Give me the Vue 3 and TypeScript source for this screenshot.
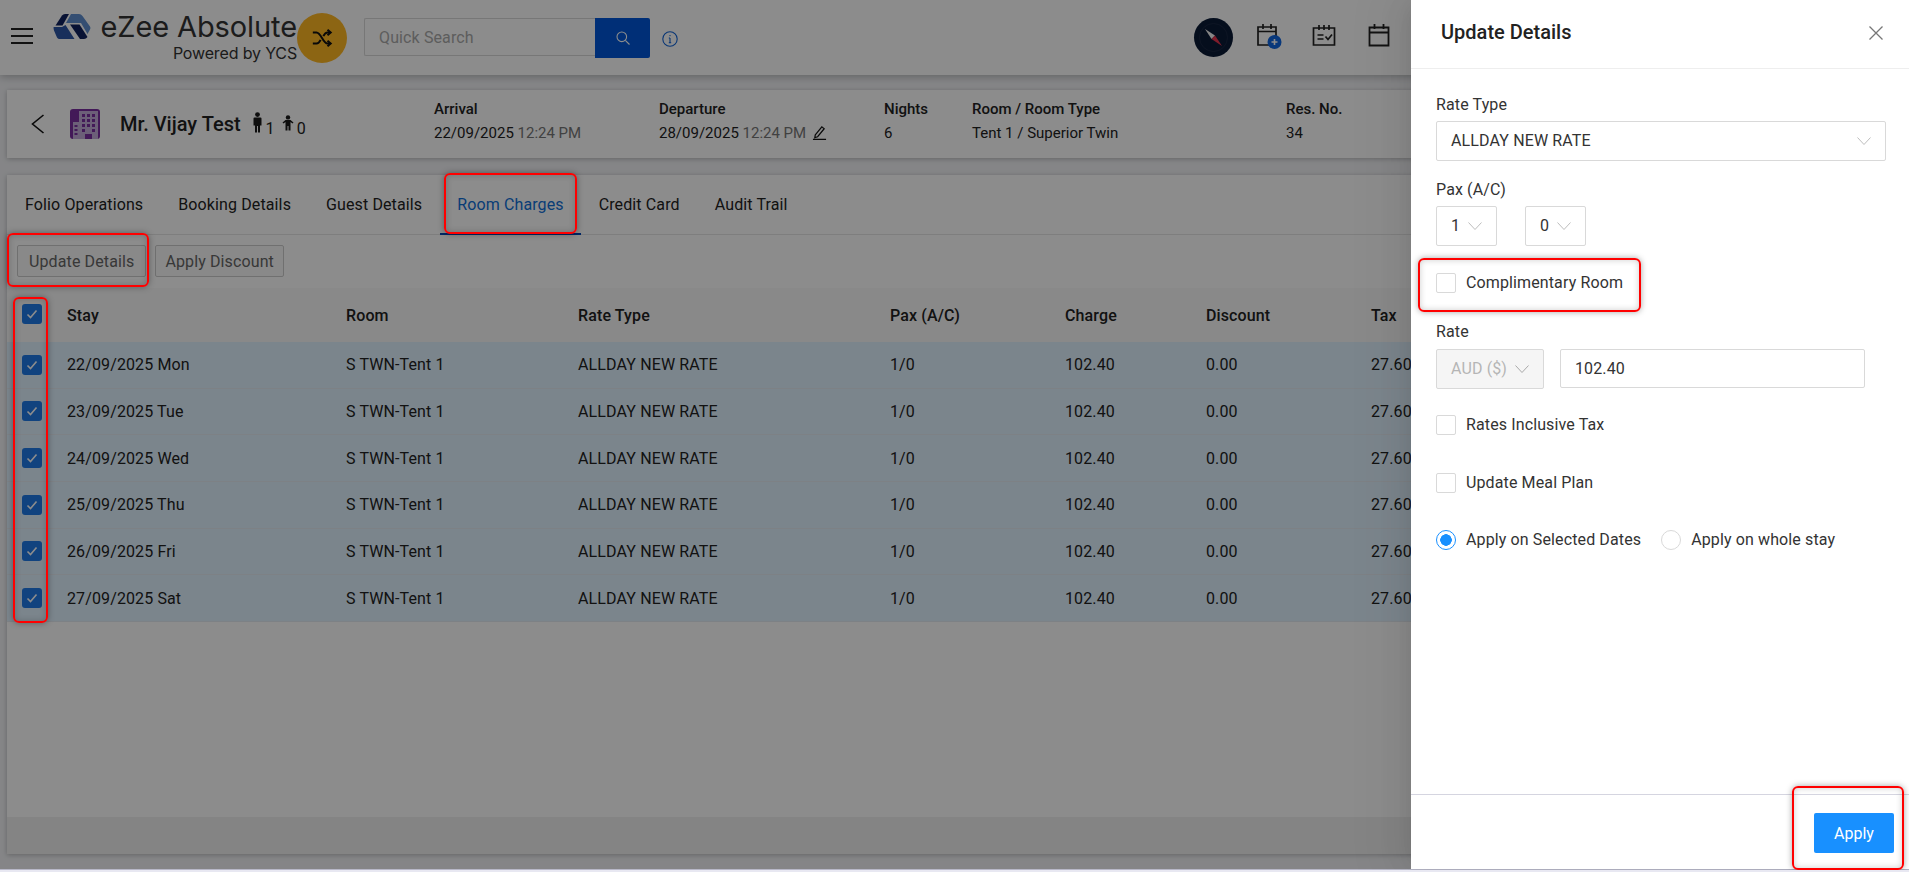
<script setup lang="ts">
interface Tab { label: string; active?: boolean }
const tabs: Tab[] = [
  { label: 'Folio Operations' },
  { label: 'Booking Details' },
  { label: 'Guest Details' },
  { label: 'Room Charges', active: true },
  { label: 'Credit Card' },
  { label: 'Audit Trail' },
]
const columns: string[] = ['Stay', 'Room', 'Rate Type', 'Pax (A/C)', 'Charge', 'Discount', 'Tax']
const stays: string[] = [
  '22/09/2025 Mon',
  '23/09/2025 Tue',
  '24/09/2025 Wed',
  '25/09/2025 Thu',
  '26/09/2025 Fri',
  '27/09/2025 Sat',
]
</script>

<template>
  <div class="app">
    <header class="topbar">
      <div class="burger"><i></i><i></i><i></i></div>
      <svg class="logo" viewBox="0 0 38 27" width="38" height="27">
        <path d="M9 2.500Q10 1 12 1H16L9.500 12.500H2.500Z" fill="#10225f" />
        <path d="M18 1H26Q28 1 29.500 3L37 13.500Q38 15 37 16.500L34.500 21 28 10H13Z" fill="#5f8fd0" />
        <path d="M17 11.500H26.500L34.500 24Q33 26 31 26H27Z" fill="#0f2260" />
        <path d="M.6 14H9L12.500 12 21.500 26H6.500Q5 26 4 24.500L1 17.500Q.4 15.500 .6 14Z" fill="#2c56a6" />
      </svg>
      <div class="brand">
        <span class="brand-name">eZee Absolute</span>
        <span class="brand-sub">Powered by YCS</span>
      </div>
      <div class="shuffle">
        <svg viewBox="0 0 24 24" width="22" height="22" fill="none" stroke="#111" stroke-width="2.200">
          <path d="M2 6h4c5 0 7 12 12 12h3" />
          <path d="M2 18h4c2 0 3.500-2 4.500-4M13.500 10c1-2 2.500-4 4.500-4h3" />
          <path d="M18 3l3.500 3L18 9M18 15l3.500 3L18 21" />
        </svg>
      </div>
      <div class="search">
        <span class="search-input">Quick Search</span>
        <span class="search-btn">
          <svg viewBox="0 0 16 16" width="16" height="16" fill="none" stroke="#fff" stroke-width="1.100">
            <circle cx="6.800" cy="6.800" r="4.800" />
            <path d="M10.300 10.300 14.500 14.500" />
          </svg>
        </span>
      </div>
      <svg class="info" viewBox="0 0 16 16" width="16" height="16" fill="none" stroke="#0f62d6" stroke-width="1.100">
        <circle cx="8" cy="8" r="7.200" />
        <path d="M8 7v4.800M6.800 7H8M6.800 11.800h2.400" />
        <circle cx="8" cy="4.600" r=".7" fill="#0f62d6" stroke="none" />
      </svg>
      <div class="top-icons">
        <div class="compass">
          <svg viewBox="0 0 39 39" width="39" height="39">
            <circle cx="19.500" cy="19.500" r="14" fill="none" stroke="#1d2a44" stroke-width=".8" />
            <path d="M11 11 L21 17.500 L17.500 21 Z" fill="#f4f4f4" />
            <path d="M28 28 L21 17.500 L17.500 21 Z" fill="#e8344e" />
          </svg>
        </div>
        <svg class="cal-plus" viewBox="0 0 27 27" width="27" height="27" fill="none" stroke="#222" stroke-width="1.700">
          <path d="M15 22H3V4h18v10" />
          <path d="M3 8.500h18M8 1v5M16 1v5" />
          <circle cx="19.500" cy="19" r="7" fill="#1066e0" stroke="none" />
          <path d="M19.500 16v6M16.500 19h6" stroke="#fff" stroke-width="1.600" />
        </svg>
        <svg class="cal-check" viewBox="0 0 24 22" width="24" height="22" fill="none" stroke="#222" stroke-width="1.700">
          <path d="M1.500 4h21v17h-21z" />
          <path d="M7 1v5M12 1v5M17 1v5" />
          <path d="M5.500 11h6M5.500 15h6M13.500 12.500l2.500 3 4-5" />
        </svg>
        <svg class="cal-plain" viewBox="0 0 22 24" width="22" height="24" fill="none" stroke="#222" stroke-width="1.800">
          <path d="M1.500 4.500h19v18h-19zM1.500 9.500h19M6.500 1v5M15.500 1v5" />
        </svg>
      </div>
    </header>

    <main class="content">
      <section class="summary">
        <div class="who">
          <svg class="back" viewBox="0 0 14 20" width="14" height="20" fill="none" stroke="#111" stroke-width="1.600">
            <path d="M12.500 1 1.500 10l11 9" />
          </svg>
          <div class="hotel">
            <svg viewBox="0 0 30 30" width="30" height="30" fill="#c5aedb">
              <path d="M9 2h19v28H9z" />
              <path d="M3 13h6v17H3z" />
              <g fill="#7b2fa0">
                <path d="M12 5h3v3h-3zM17 5h3v3h-3zM22 5h3v3h-3zM12 10h3v3h-3zM17 10h3v3h-3zM22 10h3v3h-3zM12 15h3v3h-3zM17 15h3v3h-3zM22 15h3v3h-3zM12 20h3v3h-3zM22 20h3v3h-3zM15 25h7v5h-7zM4.500 16h3v2h-3zM4.500 20h3v2h-3zM4.500 24h3v2h-3z" />
              </g>
            </svg>
          </div>
          <span class="guest">Mr. Vijay Test</span>
          <svg class="adult" viewBox="0 0 10 21" width="11" height="21" fill="#1a1a1a">
            <circle cx="5" cy="2.600" r="2.400" />
            <path d="M1 6.500Q1 5.500 2 5.500h6Q9 5.500 9 6.500v7H7.500V20.500h-2V14h-1V20.500h-2V13.500H1z" />
          </svg>
          <span class="count">1</span>
          <svg class="child" viewBox="0 0 12 16" width="12" height="16" fill="#1a1a1a">
            <circle cx="6" cy="2.400" r="2.200" />
            <path d="M.5 7.500 3.500 5h5l3 2.500-1 1L8.500 7v3.200V15.500h-2V11h-1v4.500h-2V7L1.500 8.500z" />
          </svg>
          <span class="count">0</span>
        </div>
        <div class="meta meta-arrival">
          <b>Arrival</b>
          <span>22/09/2025 <em>12:24 PM</em></span>
        </div>
        <div class="meta meta-departure">
          <b>Departure</b>
          <span>28/09/2025 <em>12:24 PM</em>
            <svg class="edit" viewBox="0 0 16 16" width="15" height="15" fill="none" stroke="#111" stroke-width="1.300">
              <path d="M3.500 10.500 10.500 2l2.500 2-7 8.500-3 1zM1 15.300h14" />
            </svg>
          </span>
        </div>
        <div class="meta meta-nights">
          <b>Nights</b>
          <span>6</span>
        </div>
        <div class="meta meta-room">
          <b>Room / Room Type</b>
          <span>Tent 1 / Superior Twin</span>
        </div>
        <div class="meta">
          <b>Res. No.</b>
          <span>34</span>
        </div>
      </section>

      <section class="folio">
        <nav class="tabs">
          <span v-for="tab in tabs" :key="tab.label" class="tab" :class="{ active: tab.active }">{{ tab.label }}</span>
        </nav>
        <div class="actions">
          <button class="btn">Update Details</button>
          <button class="btn btn-discount">Apply Discount</button>
        </div>
        <div class="table">
          <div class="row head">
            <span class="check"><svg viewBox="0 0 20 20" width="20" height="20"><path d="M5.500 10.500l3 3 6-7" fill="none" stroke="#fff" stroke-width="1.600" /></svg></span>
            <span v-for="c in columns" :key="c">{{ c }}</span>
          </div>
          <div v-for="s in stays" :key="s" class="row body-row">
            <span class="check"><svg viewBox="0 0 20 20" width="20" height="20"><path d="M5.500 10.500l3 3 6-7" fill="none" stroke="#fff" stroke-width="1.600" /></svg></span>
            <span>{{ s }}</span>
            <span>S TWN-Tent 1</span>
            <span>ALLDAY NEW RATE</span>
            <span>1/0</span>
            <span>102.40</span>
            <span>0.00</span>
            <span>27.60</span>
          </div>
        </div>
        <div class="table-fill"></div>
        <div class="table-foot"></div>
      </section>
    </main>

    <div class="overlay"></div>

    <aside class="drawer">
      <div class="drawer-head">
        <h2>Update Details</h2>
        <svg viewBox="0 0 14 14" width="14" height="14" fill="none" stroke="#777" stroke-width="1.300">
          <path d="M.5.500l13 13M13.500.500l-13 13" />
        </svg>
      </div>
      <div class="drawer-body">
        <label class="field-label">Rate Type</label>
        <div class="select select-wide">
          <span>ALLDAY NEW RATE</span>
          <svg class="chev" viewBox="0 0 14 8" width="14" height="8"><path d="M.5.500 7 7.500 13.500.500" fill="none" stroke="#bdbdbd" /></svg>
        </div>
        <label class="field-label pax-label">Pax (A/C)</label>
        <div class="pax">
          <div class="select select-small">
            <span>1</span>
            <svg class="chev" viewBox="0 0 14 8" width="14" height="8"><path d="M.5.500 7 7.500 13.500.500" fill="none" stroke="#bdbdbd" /></svg>
          </div>
          <div class="select select-small">
            <span>0</span>
            <svg class="chev" viewBox="0 0 14 8" width="14" height="8"><path d="M.5.500 7 7.500 13.500.500" fill="none" stroke="#bdbdbd" /></svg>
          </div>
        </div>
        <div class="option complimentary"><i class="box"></i>Complimentary Room</div>
        <label class="field-label rate-label">Rate</label>
        <div class="rate">
          <div class="select select-currency">
            <span>AUD ($)</span>
            <svg class="chev" viewBox="0 0 14 8" width="14" height="8"><path d="M.5.500 7 7.500 13.500.500" fill="none" stroke="#a8a8a8" /></svg>
          </div>
          <div class="rate-input">102.40</div>
        </div>
        <div class="option inclusive"><i class="box"></i>Rates Inclusive Tax</div>
        <div class="option meal"><i class="box"></i>Update Meal Plan</div>
        <div class="radios">
          <div class="option"><i class="radio on"></i>Apply on Selected Dates</div>
          <div class="option"><i class="radio"></i>Apply on whole stay</div>
        </div>
      </div>
      <div class="drawer-foot">
        <button class="apply">Apply</button>
      </div>
    </aside>

    <div class="mark mark-tab"></div>
    <div class="mark mark-update"></div>
    <div class="mark mark-checks"></div>
    <div class="mark mark-comp"></div>
    <div class="mark mark-apply"></div>
  </div>
</template>

<style>
html, body { margin: 0; background: #e8e8f2; }
</style>

<style scoped>
.app {
  position: relative;
  width: 1909px;
  height: 870px;
  overflow: hidden;
  background: #f2f3f6;
  font-family: Roboto, "Liberation Sans", sans-serif;
  font-size: 16px;
  letter-spacing: .12px;
  color: #222;
  box-shadow: inset 0 -1px 0 #b8b8c8;
}
.topbar {
  height: 75px;
  display: flex;
  align-items: flex-start;
  background: #fff;
  box-shadow: 0 2px 8px rgba(0, 0, 0, .25);
  position: relative;
}
.burger {
  margin: 28px 0 0 11px;
  width: 22px;
  height: 16px;
  display: flex;
  flex-direction: column;
  justify-content: space-between;
}
.burger i { display: block; height: 2px; background: #222; }
.logo { margin: 13px 0 0 20px; flex: none; }
.brand {
  width: 197px;
  margin: 10px 0 0 9px;
  display: flex;
  flex-direction: column;
  align-items: flex-end;
  color: #333;
  flex: none;
}
.brand-name { font-family: Inter, sans-serif; font-size: 29px; line-height: 33px; letter-spacing: -.1px; white-space: nowrap; }
.brand-sub { font-family: Inter, sans-serif; font-size: 16px; line-height: 20px; letter-spacing: -.15px; white-space: nowrap; }
.shuffle {
  width: 50px;
  height: 50px;
  margin: 13px 0 0;
  border-radius: 50%;
  background: #ffb824;
  display: flex;
  align-items: center;
  justify-content: center;
  flex: none;
}
.search { display: flex; margin: 18px 0 0 17px; height: 40px; flex: none; }
.search-input {
  width: 231px;
  height: 38px;
  line-height: 38px;
  padding-left: 14px;
  border: 1px solid #d9d9d9;
  border-right: 0;
  border-radius: 2px 0 0 2px;
  box-sizing: border-box;
  color: #aaa;
}
.search-btn {
  width: 55px;
  height: 40px;
  background: #0057d9;
  border-radius: 0 2px 2px 0;
  display: flex;
  align-items: center;
  justify-content: center;
}
.info { margin: 31px 0 0 12px; flex: none; }
.top-icons { display: flex; margin-left: 516px; align-items: flex-start; flex: none; }
.compass {
  width: 39px;
  height: 39px;
  margin-top: 18px;
  border-radius: 50%;
  background: #0a1a36;
  flex: none;
}
.cal-plus { margin: 23px 0 0 22px; flex: none; }
.cal-check { margin: 24px 0 0 30px; flex: none; }
.cal-plain { margin: 23px 0 0 32px; flex: none; }

.content { padding: 15px 7px 0; height: 779px; box-sizing: border-box; display: flex; flex-direction: column; gap: 17px; }
.summary {
  height: 68px;
  flex: none;
  background: #fff;
  box-shadow: 0 1px 5px rgba(0, 0, 0, .25);
  display: flex;
  align-items: center;
}
.who { width: 427px; flex: none; display: flex; align-items: center; }
.back { margin-left: 24px; flex: none; }
.hotel {
  width: 30px;
  height: 30px;
  margin-left: 25px;
  background: #7b2fa0;
  border-radius: 3px;
  flex: none;
}
.hotel svg { display: block; }
.guest { margin-left: 20px; font-size: 20px; font-weight: 500; letter-spacing: 0; white-space: nowrap; }
.adult { margin: -4px 0 0 11px; flex: none; }
.child { margin: -2px 0 0 7px; flex: none; }
.count { font-size: 16px; margin: 8px 0 0 3px; }
.meta { display: flex; flex-direction: column; gap: 6px; font-size: 15px; letter-spacing: 0; line-height: 18px; white-space: nowrap; margin-top: -6px; }
.meta b { font-weight: 500; }
.meta em { font-style: normal; color: #777; }
.meta-arrival { width: 225px; flex: none; }
.meta-departure { width: 225px; flex: none; }
.meta-nights { width: 88px; flex: none; }
.meta-room { width: 314px; flex: none; }
.edit { vertical-align: -2px; margin-left: 6px; }

.folio {
  flex: none;
  height: 679px;
  background: #fff;
  box-shadow: 0 1px 5px rgba(0, 0, 0, .25);
  display: flex;
  flex-direction: column;
}
.tabs { height: 59px; border-bottom: 1px solid #e6e6e6; display: flex; padding-left: 1px; flex: none; }
.tab {
  padding: 0 17px;
  margin-right: 1px;
  line-height: 59px;
  white-space: nowrap;
}
.tab.active { color: #0f6fd8; border-bottom: 2px solid #0046b8; height: 58px; }
.actions { height: 53px; flex: none; display: flex; gap: 9px; padding: 10px 0 0 10px; box-sizing: border-box; }
.btn {
  height: 32px;
  padding: 0 11px;
  background: #fafafa;
  border: 1px solid #ccc;
  border-radius: 2px;
  font: 16px Roboto, sans-serif;
  letter-spacing: .12px;
  color: #666;
  white-space: nowrap;
}
.btn-discount { padding: 0 9px; }
.table { flex: none; }
.row {
  display: grid;
  grid-template-columns: 60px 279px 232px 312px 175px 141px 165px 1fr;
  align-items: center;
  height: 46.67px;
  border-bottom: 1px solid #e4ecf2;
  box-sizing: border-box;
  white-space: nowrap;
}
.row.head { height: 54px; font-weight: 500; background: #f9f9f9; border-bottom: 0; }
.row.head .check { margin-top: -2px; }
.body-row { background: #e1f2ff; }
.check {
  width: 20px;
  height: 20px;
  margin-left: 15px;
  background: #1f7be8;
  border-radius: 3px;
  display: block;
}
.check svg { display: block; }
.table-fill { flex: 1; }
.table-foot { height: 37px; flex: none; background: #f0f0f0; }

.overlay { position: absolute; inset: 0 0 1px; background: rgba(0, 0, 0, .45); }
.drawer {
  position: absolute;
  top: 0;
  right: 0;
  bottom: 1px;
  width: 498px;
  background: #fff;
  box-shadow: -6px 0 16px -8px rgba(0, 0, 0, .08), -9px 0 28px rgba(0, 0, 0, .05), -12px 0 48px 16px rgba(0, 0, 0, .03);
  display: flex;
  flex-direction: column;
  color: #333;
}
.drawer-head {
  height: 69px;
  flex: none;
  border-bottom: 1px solid #eee;
  box-sizing: border-box;
  display: flex;
  align-items: center;
  justify-content: space-between;
  padding: 0 26px 2px 30px;
}
.drawer-head h2 { margin: 0 0 3px; font-size: 20px; font-weight: 500; letter-spacing: 0; color: #222; }
.drawer-body { flex: 1; padding: 26px 23px 0 25px; display: flex; flex-direction: column; align-items: flex-start; }
.field-label { display: block; line-height: 20px; }
.select {
  height: 40px;
  border: 1px solid #d9d9d9;
  border-radius: 2px;
  box-sizing: border-box;
  display: flex;
  align-items: center;
  justify-content: space-between;
  padding: 0 14px 1px;
}
.select-wide { width: 450px; margin-top: 6px; }
.pax-label { margin-top: 19px; }
.pax { display: flex; gap: 28px; margin-top: 6px; }
.select-small { width: 61px; }
.complimentary { margin-top: 27px; }
.option { display: flex; align-items: center; gap: 10px; line-height: 20px; white-space: nowrap; }
.box { display: block; width: 20px; height: 20px; border: 1px solid #d9d9d9; border-radius: 2px; box-sizing: border-box; }
.rate-label { margin-top: 29px; }
.rate { display: flex; gap: 16px; margin-top: 7px; }
.select-currency { width: 108px; background: #f5f5f5; color: #b5b5b5; }
.rate-input {
  width: 305px;
  height: 39px;
  line-height: 37px;
  padding-left: 14px;
  border: 1px solid #d9d9d9;
  border-radius: 2px;
  box-sizing: border-box;
}
.inclusive { margin-top: 26px; }
.meal { margin-top: 38px; }
.radios { display: flex; gap: 20px; margin-top: 37px; }
.radio { display: block; width: 20px; height: 20px; border: 1px solid #d9d9d9; border-radius: 50%; box-sizing: border-box; }
.radio.on { border-color: #1890ff; background: radial-gradient(circle, #1890ff 0 5.500px, #fff 6px); }
.drawer-foot { height: 75px; flex: none; border-top: 1px solid #d5d5e0; box-sizing: border-box; display: flex; justify-content: flex-end; padding: 18px 15px 0 0; }
.apply {
  width: 80px;
  height: 40px;
  background: #1890ff;
  color: #fff;
  border: 0;
  border-radius: 2px;
  font: 16px Roboto, sans-serif;
}

.mark {
  position: absolute;
  border: 2px solid #f00;
  border-radius: 6px;
  box-sizing: border-box;
  box-shadow: 0 0 6px rgba(0, 0, 0, .35), inset 0 0 6px rgba(0, 0, 0, .2);
}
.mark-tab { left: 444px; top: 173px; width: 133px; height: 61px; }
.mark-update { left: 7px; top: 233px; width: 142px; height: 54px; }
.mark-checks { left: 13px; top: 297px; width: 35px; height: 326px; }
.mark-comp { left: 1418px; top: 258px; width: 223px; height: 54px; }
.mark-apply { left: 1792px; top: 786px; width: 112px; height: 84px; }
</style>
